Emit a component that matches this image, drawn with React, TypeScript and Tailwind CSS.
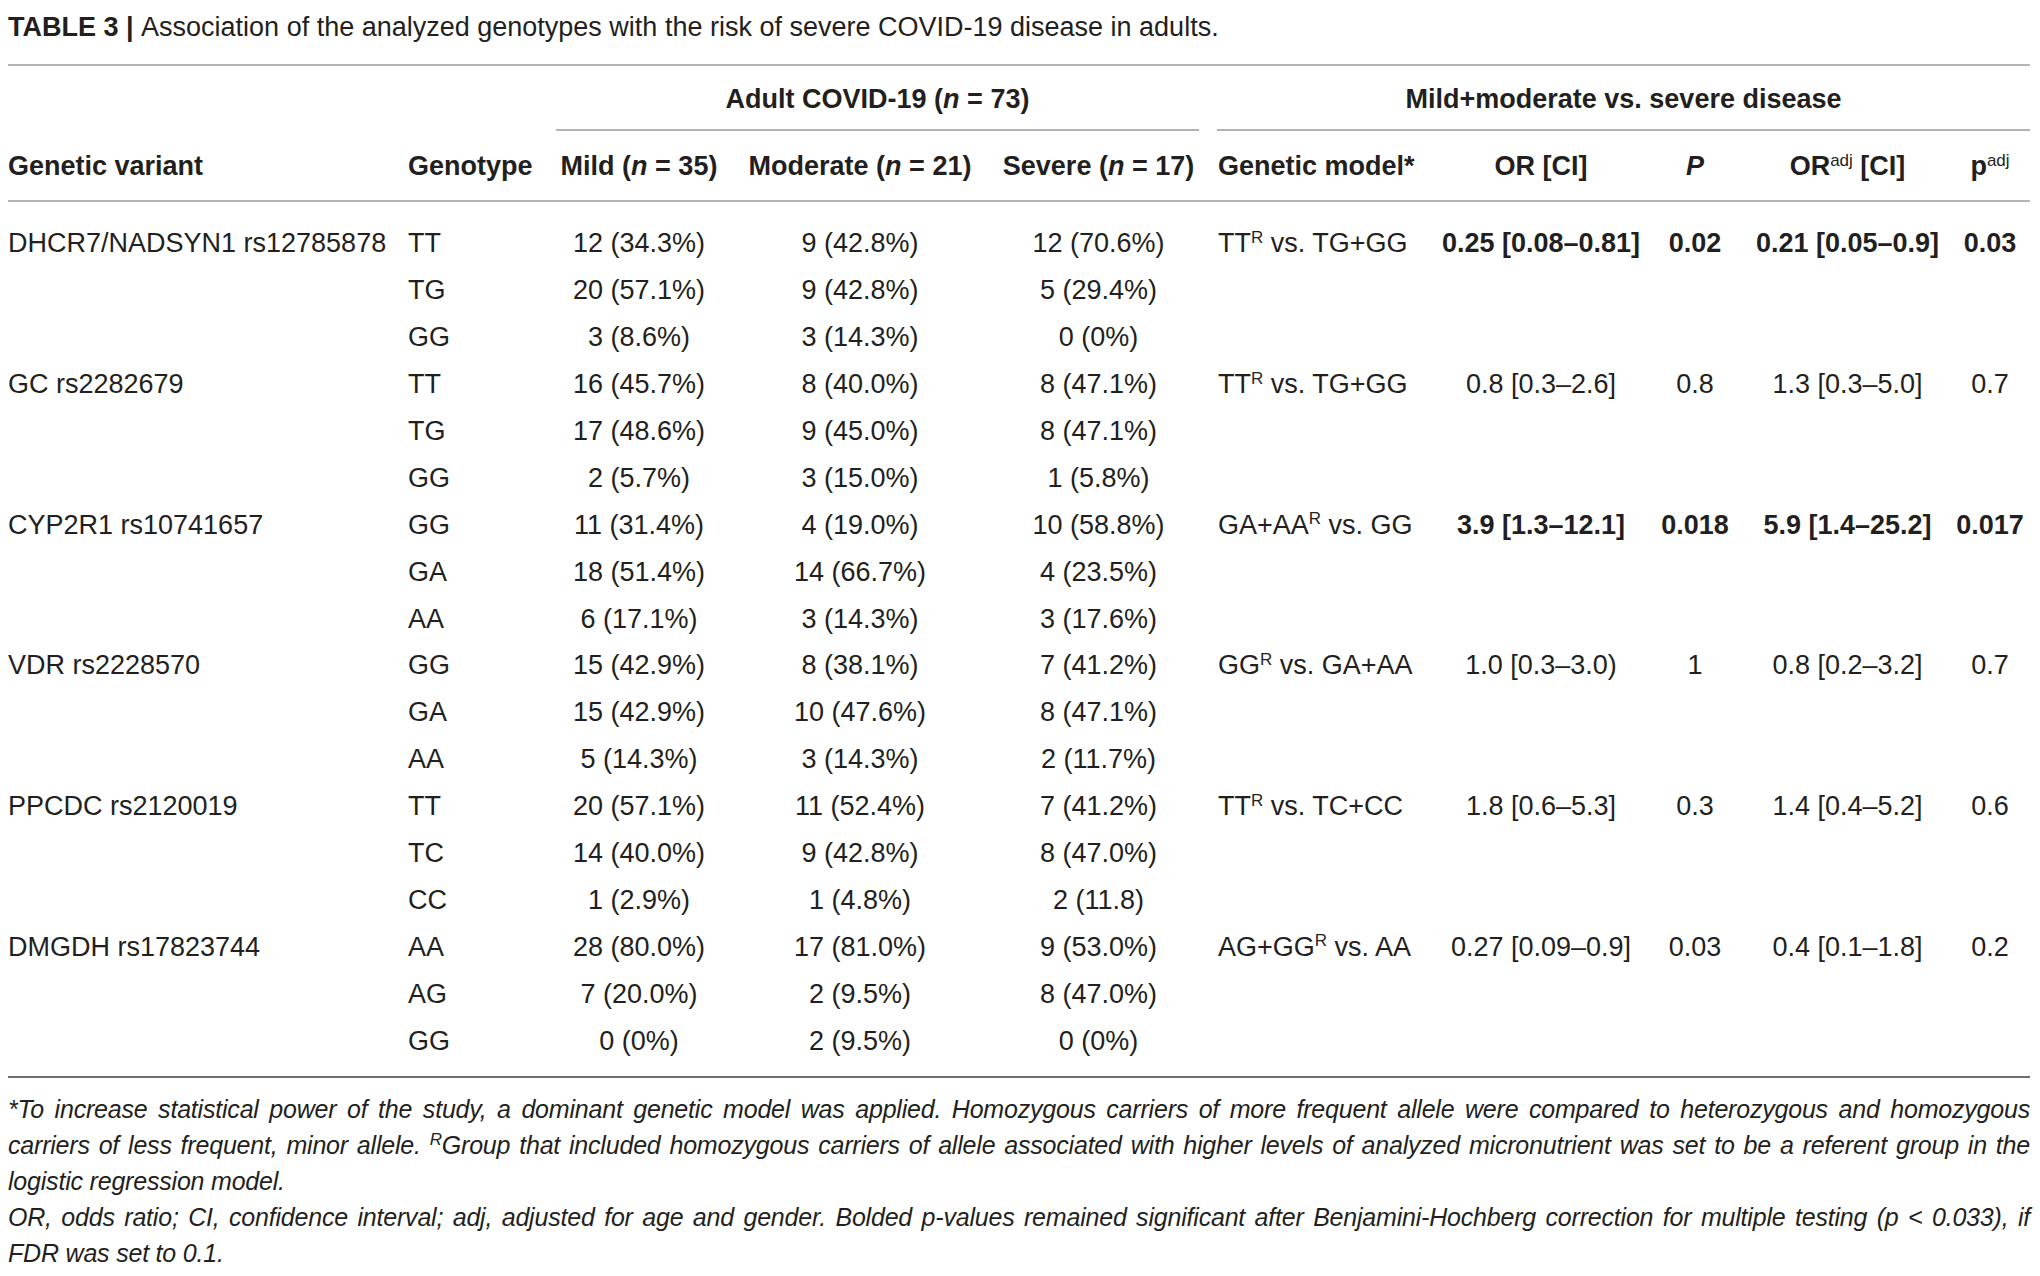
const rows = [
  {
    variant: "DHCR7/NADSYN1 rs12785878",
    model: ["TT", " vs. TG+GG"],
    or: "0.25 [0.08–0.81]",
    p: "0.02",
    orAdj: "0.21 [0.05–0.9]",
    pAdj: "0.03",
    bold: true,
    genotypes: [
      ["TT", "12 (34.3%)", "9 (42.8%)", "12 (70.6%)"],
      ["TG", "20 (57.1%)", "9 (42.8%)", "5 (29.4%)"],
      ["GG", "3 (8.6%)", "3 (14.3%)", "0 (0%)"],
    ],
  },
  {
    variant: "GC rs2282679",
    model: ["TT", " vs. TG+GG"],
    or: "0.8 [0.3–2.6]",
    p: "0.8",
    orAdj: "1.3 [0.3–5.0]",
    pAdj: "0.7",
    bold: false,
    genotypes: [
      ["TT", "16 (45.7%)", "8 (40.0%)", "8 (47.1%)"],
      ["TG", "17 (48.6%)", "9 (45.0%)", "8 (47.1%)"],
      ["GG", "2 (5.7%)", "3 (15.0%)", "1 (5.8%)"],
    ],
  },
  {
    variant: "CYP2R1 rs10741657",
    model: ["GA+AA", " vs. GG"],
    or: "3.9 [1.3–12.1]",
    p: "0.018",
    orAdj: "5.9 [1.4–25.2]",
    pAdj: "0.017",
    bold: true,
    genotypes: [
      ["GG", "11 (31.4%)", "4 (19.0%)", "10 (58.8%)"],
      ["GA", "18 (51.4%)", "14 (66.7%)", "4 (23.5%)"],
      ["AA", "6 (17.1%)", "3 (14.3%)", "3 (17.6%)"],
    ],
  },
  {
    variant: "VDR rs2228570",
    model: ["GG", " vs. GA+AA"],
    or: "1.0 [0.3–3.0)",
    p: "1",
    orAdj: "0.8 [0.2–3.2]",
    pAdj: "0.7",
    bold: false,
    genotypes: [
      ["GG", "15 (42.9%)", "8 (38.1%)", "7 (41.2%)"],
      ["GA", "15 (42.9%)", "10 (47.6%)", "8 (47.1%)"],
      ["AA", "5 (14.3%)", "3 (14.3%)", "2 (11.7%)"],
    ],
  },
  {
    variant: "PPCDC rs2120019",
    model: ["TT", " vs. TC+CC"],
    or: "1.8 [0.6–5.3]",
    p: "0.3",
    orAdj: "1.4 [0.4–5.2]",
    pAdj: "0.6",
    bold: false,
    genotypes: [
      ["TT", "20 (57.1%)", "11 (52.4%)", "7 (41.2%)"],
      ["TC", "14 (40.0%)", "9 (42.8%)", "8 (47.0%)"],
      ["CC", "1 (2.9%)", "1 (4.8%)", "2 (11.8)"],
    ],
  },
  {
    variant: "DMGDH rs17823744",
    model: ["AG+GG", " vs. AA"],
    or: "0.27 [0.09–0.9]",
    p: "0.03",
    orAdj: "0.4 [0.1–1.8]",
    pAdj: "0.2",
    bold: false,
    genotypes: [
      ["AA", "28 (80.0%)", "17 (81.0%)", "9 (53.0%)"],
      ["AG", "7 (20.0%)", "2 (9.5%)", "8 (47.0%)"],
      ["GG", "0 (0%)", "2 (9.5%)", "0 (0%)"],
    ],
  },
];

const grid =
  "grid grid-cols-[396px_152px_166px_276px_201px_238px_208px_100px_205px_80px]";

const Sup = ({ children }: { children: React.ReactNode }) => (
  <sup className="text-[17px] font-normal top-[-0.55em]">{children}</sup>
);

export default function App() {
  return (
    <div className="min-h-screen bg-white pl-[8px] pt-[9px] font-['Liberation_Sans',Arial,sans-serif] text-[27px] leading-[36px] text-[#231f20]">
      <div className="w-[2022px]">
        {/* Caption */}
        <p>
          <span className="font-bold">TABLE 3 | </span>
          Association of the analyzed genotypes with the risk of severe COVID-19 disease in adults.
        </p>

        {/* Table */}
        <div className="mt-[19px] border-t-2 border-[#b3b3b3]">
          <div className={`${grid} font-bold`}>
            <div className="col-span-2" />
            <div className="col-span-3 border-b-2 border-[#b3b3b3] pt-[15px] pb-[12px] text-center">
              Adult COVID-19 (<i>n</i> = 73)
            </div>
            <div className="col-span-5 ml-[18px] border-b-2 border-[#b3b3b3] pt-[15px] pb-[12px] text-center">
              Mild+moderate vs. severe disease
            </div>
          </div>

          <div className={`${grid} border-b-2 border-[#b3b3b3] pt-[17px] pb-[16px] font-bold`}>
            <div>Genetic variant</div>
            <div className="pl-[4px]">Genotype</div>
            <div className="text-center">
              Mild (<i>n</i> = 35)
            </div>
            <div className="text-center">
              Moderate (<i>n</i> = 21)
            </div>
            <div className="text-center">
              Severe (<i>n</i> = 17)
            </div>
            <div className="pl-[19px]">Genetic model*</div>
            <div className="text-center">OR [CI]</div>
            <div className="text-center italic">P</div>
            <div className="text-center">
              OR<Sup>adj</Sup> [CI]
            </div>
            <div className="text-center">
              p<Sup>adj</Sup>
            </div>
          </div>

          <div className="border-b-2 border-[#6e6e6e] pt-[18px] pb-[12px]">
            {rows.map((r) =>
              r.genotypes.map((g, i) => (
                <div key={r.variant + g[0]} className={`${grid} h-[46.9px] items-center`}>
                  <div>{i === 0 ? r.variant : ""}</div>
                  <div className="pl-[4px]">{g[0]}</div>
                  <div className="text-center">{g[1]}</div>
                  <div className="text-center">{g[2]}</div>
                  <div className="text-center">{g[3]}</div>
                  {i === 0 ? (
                    <>
                      <div className="pl-[19px] whitespace-nowrap">
                        {r.model[0]}
                        <Sup>R</Sup>
                        {r.model[1]}
                      </div>
                      <div className={`text-center whitespace-nowrap ${r.bold ? "font-bold" : ""}`}>{r.or}</div>
                      <div className={`text-center ${r.bold ? "font-bold" : ""}`}>{r.p}</div>
                      <div className={`text-center whitespace-nowrap ${r.bold ? "font-bold" : ""}`}>{r.orAdj}</div>
                      <div className={`text-center ${r.bold ? "font-bold" : ""}`}>{r.pAdj}</div>
                    </>
                  ) : (
                    <div className="col-span-5" />
                  )}
                </div>
              ))
            )}
          </div>
        </div>

        {/* Footnotes */}
        <div className="mt-[13px] text-[25px] tracking-[-0.2px] italic">
          <div className="text-justify [text-align-last:justify]">
            *To increase statistical power of the study, a dominant genetic model was applied. Homozygous carriers of more frequent allele were compared to heterozygous and homozygous
          </div>
          <div className="text-justify [text-align-last:justify]">
            carriers of less frequent, minor allele. <Sup>R</Sup>Group that included homozygous carriers of allele associated with higher levels of analyzed micronutrient was set to be a referent group in the
          </div>
          <div>logistic regression model.</div>
          <div className="text-justify [text-align-last:justify]">
            OR, odds ratio; CI, confidence interval; adj, adjusted for age and gender. Bolded p-values remained significant after Benjamini-Hochberg correction for multiple testing (p &lt; 0.033), if
          </div>
          <div>FDR was set to 0.1.</div>
        </div>
      </div>
    </div>
  );
}
